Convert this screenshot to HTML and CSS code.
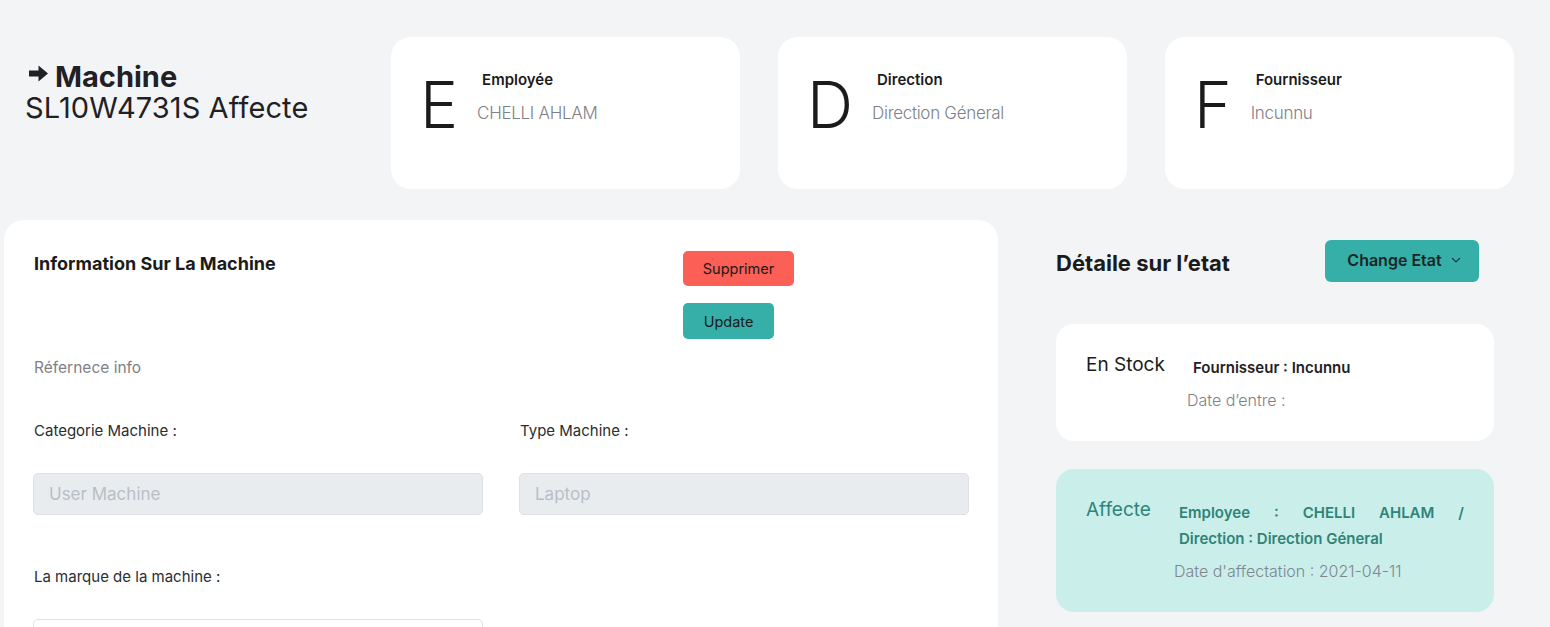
FILE: index.html
```html
<!DOCTYPE html>
<html lang="fr">
<head>
<meta charset="utf-8">
<title>Machine</title>
<link rel="stylesheet" href="styles.css">
</head>
<body>
<div class="page">
  <header class="top">
    <div class="title">
      <div class="title-l1">
        <svg class="arrow" viewBox="0 0 21 19" width="21" height="19"><path d="M1 6.5h9.5V1.5l9.5 8-9.5 8v-5H1z" fill="#1f2124"/></svg>
        <span>Machine</span>
      </div>
      <div class="title-l2">SL10W4731S Affecte</div>
    </div>
    <div class="stat">
      <div class="stat-letter">E</div>
      <div class="stat-body">
        <div class="stat-label">Employée</div>
        <div class="stat-value">CHELLI AHLAM</div>
      </div>
    </div>
    <div class="stat">
      <div class="stat-letter">D</div>
      <div class="stat-body">
        <div class="stat-label">Direction</div>
        <div class="stat-value">Direction Géneral</div>
      </div>
    </div>
    <div class="stat">
      <div class="stat-letter">F</div>
      <div class="stat-body">
        <div class="stat-label">Fournisseur</div>
        <div class="stat-value">Incunnu</div>
      </div>
    </div>
  </header>

  <main class="main">
    <section class="info-card">
      <div class="info-head">
        <h2 class="info-title">Information Sur La Machine</h2>
        <div class="actions">
          <button class="btn btn-red">Supprimer</button>
          <button class="btn btn-teal">Update</button>
        </div>
      </div>
      <div class="ref">Réfernece info</div>
      <div class="form">
        <div class="field">
          <label>Categorie Machine :</label>
          <div class="input disabled">User Machine</div>
        </div>
        <div class="field">
          <label>Type Machine :</label>
          <div class="input disabled">Laptop</div>
        </div>
        <div class="field">
          <label>La marque de la machine :</label>
          <div class="input"></div>
        </div>
      </div>
    </section>

    <aside class="side">
      <div class="side-head">
        <h2 class="side-title">Détaile sur l’etat</h2>
        <button class="btn-state">Change Etat
          <svg viewBox="0 0 10 6" width="10" height="6"><path d="M1 1l4 4 4-4" fill="none" stroke="#1d3b38" stroke-width="1.1"/></svg>
        </button>
      </div>
      <div class="state">
        <div class="state-name">En Stock</div>
        <div class="state-body">
          <div class="state-strong">Fournisseur : Incunnu</div>
          <div class="state-date">Date d’entre :</div>
        </div>
      </div>
      <div class="state state-active">
        <div class="state-name">Affecte</div>
        <div class="state-body">
          <div class="state-strong">
            <div class="line-just">Employee : CHELLI AHLAM /</div>
            <div>Direction : Direction Géneral</div>
          </div>
          <div class="state-date">Date d'affectation : 2021-04-11</div>
        </div>
      </div>
    </aside>
  </main>
</div>
</body>
</html>
```

FILE: styles.css
```css
* { box-sizing: border-box; }
html, body { margin: 0; padding: 0; }
body {
  background: #f3f4f6;
  font-family: Inter, "Noto Sans", sans-serif;
  color: #1f2124;
  overflow: hidden;
}
.page { width: 1550px; }

.top {
  display: flex;
  align-items: flex-start;
  padding: 37px 0 0 25px;
  gap: 38px;
}
.title {
  width: 328px;
  padding-top: 23px;
}
.title-l1 {
  display: flex;
  align-items: center;
  gap: 6px;
  padding-left: 3px;
  font-size: 29px;
  font-weight: 700;
  line-height: 33px;
}
.title-l1 .arrow { margin-top: -7px; }
.title-l2 {
  font-size: 29px;
  line-height: 30px;
  font-weight: 400;
  letter-spacing: 0.1px;
}

.stat {
  width: 349px;
  height: 152px;
  background: #fff;
  border-radius: 20px;
  display: flex;
  align-items: flex-start;
  padding: 30px 0 0 29px;
}
.stat-letter {
  font-size: 64px;
  font-weight: 300;
  line-height: 76px;
  margin-right: 19px;
  color: #1b1b1b;
}
.stat-body { padding-top: 3px; }
.stat-label {
  font-size: 15px;
  font-weight: 600;
  line-height: 20px;
  padding-left: 5px;
  color: #1b1b1b;
}
.stat-value {
  margin-top: 12px;
  font-size: 17px;
  font-weight: 300;
  color: #7d8187;
  line-height: 22px;
  letter-spacing: -0.3px;
}

.main {
  display: flex;
  align-items: flex-start;
  padding: 31px 0 0 4px;
  gap: 58px;
}
.info-card {
  width: 994px;
  height: 420px;
  background: #fff;
  border-radius: 20px 20px 0 0;
  padding: 32px 30px 0 30px;
}
.info-head { display: flex; }
.info-title {
  margin: 0;
  width: 649px;
  font-size: 18px;
  font-weight: 700;
  line-height: 24px;
  color: #1b1b1b;
}
.actions {
  display: flex;
  flex-direction: column;
  align-items: flex-start;
  gap: 17px;
  margin-top: -1px;
}
.btn {
  font-family: Inter, "Noto Sans", sans-serif;
  font-size: 14.5px;
  color: #1a1a1a;
  border: none;
  border-radius: 5px;
  height: 36px;
  padding: 0;
  cursor: pointer;
}
.btn-red { background: #fb5f55; width: 111px; height: 35px; }
.btn-teal { background: #35afa8; width: 91px; }
.ref {
  margin-top: 19px;
  font-size: 15.5px;
  color: #7d8187;
  line-height: 20px;
}
.form {
  display: grid;
  grid-template-columns: 450px 450px;
  column-gap: 36px;
  margin-top: 43px;
  margin-left: -1px;
}
.field { display: flex; flex-direction: column; height: 146px; }
.field label {
  font-size: 15px;
  line-height: 20px;
  color: #2b2d30;
  padding-left: 1px;
}
.input {
  margin-top: 32px;
  height: 42px;
  border: 1px solid #dde1e5;
  border-radius: 5px;
  background: #fff;
  font-size: 17px;
  line-height: 40px;
  padding-left: 15px;
}
.input.disabled { background: #e9ecef; color: #b9bec4; }

.side { width: 438px; }
.side-head {
  display: flex;
  align-items: center;
  justify-content: space-between;
  padding-right: 15px;
  margin-top: 20px;
}
.side-title {
  margin: 0;
  font-size: 22px;
  font-weight: 700;
  line-height: 28px;
  color: #1b1b1b;
  padding-top: 4px;
}
.btn-state {
  width: 154px;
  height: 42px;
  border: none;
  border-radius: 6px;
  background: #35afa8;
  color: #1b2624;
  font-family: Inter, "Noto Sans", sans-serif;
  font-size: 16px;
  font-weight: 600;
  display: flex;
  align-items: center;
  justify-content: center;
  gap: 9px;
  padding: 0 0 2px 4px;
}
.state {
  margin-top: 42px;
  background: #fff;
  border-radius: 18px;
  display: flex;
  padding: 29px 20px 29px 30px;
  min-height: 117px;
}
.state + .state { margin-top: 28px; }
.state-name {
  flex-shrink: 0;
  font-size: 19px;
  line-height: 24px;
  width: 93px;
  color: #1b1b1b;
}
.state-body { display: flex; flex-direction: column; }
.state-strong {
  font-size: 15px;
  font-weight: 600;
  line-height: 26px;
  margin-top: 2px;
  padding-left: 14px;
}
.state-date {
  margin-top: 8px;
  padding-left: 8px;
  font-size: 16px;
  line-height: 22px;
  color: #7d8187;
  font-weight: 300;
}
.state-active {
  background: #caeeea;
  min-height: 143px;
  padding: 29px 30px 28px 30px;
}
.state-active .state-name { color: #2e8479; }
.state-active .state-strong {
  color: #2e8479;
  width: 285px;
  padding-left: 0;
  margin-top: 2px;
}
.line-just { text-align: justify; text-align-last: justify; }
.state-active .state-date { margin-top: 8px; color: #81878c; padding-left: 0; margin-left: -5px; }
```
